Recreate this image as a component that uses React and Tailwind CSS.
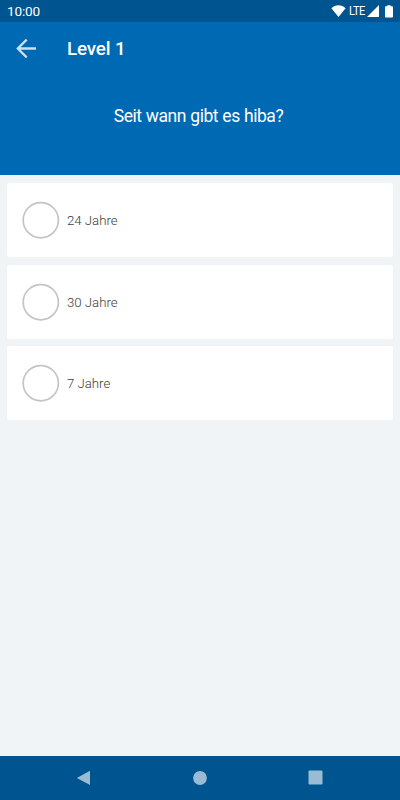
import React, { useState } from 'react';

const answers = [
  { id: 1, text: '24 Jahre' },
  { id: 2, text: '30 Jahre' },
  { id: 3, text: '7 Jahre' }
];

const StatusBar = () => (
  <div className="flex h-[22px] items-center justify-between bg-[#00548f] pl-[7px] pr-[7px] text-white">
    <span className="text-[13.6px] leading-[22px] tracking-[-0.2px]">10:00</span>
    <div className="flex h-[22px] items-center">
      <svg width="15" height="12" viewBox="0 0 15 12" fill="currentColor">
        <path d="M0.4 3.3C2.3 1.2 4.8 0.2 7.5 0.2s5.2 1 7.1 3.1L7.5 12z" />
      </svg>
      <span className="ml-[3px] w-[16px] origin-left scale-x-[0.88] text-[12.5px] leading-[22px] tracking-[-0.6px]">LTE</span>
      <svg className="ml-[2px]" width="12" height="12" viewBox="0 0 12 12" fill="currentColor">
        <path d="M12 0v12H0z" />
      </svg>
      <svg className="ml-[6px]" width="8" height="13" viewBox="0 0 8 13" fill="currentColor">
        <path d="M2.3 0.3h3.4v1H7.2a.8.8 0 0 1 .8.8v9.6a.8.8 0 0 1-.8.8H.8a.8.8 0 0 1-.8-.8V2.1a.8.8 0 0 1 .8-.8h1.5z" />
      </svg>
    </div>
  </div>
);

const NavigationBar = () => (
  <div className="flex h-[44.5px] items-center justify-between bg-[#00548f] pl-[76px] pr-[77px] text-[#99bbd3]">
    <svg width="15" height="16" viewBox="0 0 15 16" fill="currentColor">
      <path d="M14 0.7v14.4L0.8 7.9z" />
    </svg>
    <svg width="14" height="14" viewBox="0 0 14 14" fill="currentColor">
      <circle cx="7" cy="7" r="6.9" />
    </svg>
    <svg width="15" height="15" viewBox="0 0 15 15" fill="currentColor">
      <rect x="0.5" y="0.5" width="14" height="14" rx="1" />
    </svg>
  </div>
);

const App = () => {
  const [selected, setSelected] = useState(null);

  return (
    <div className="flex h-screen w-full flex-col bg-[#f0f4f7] font-['Roboto',sans-serif]">
      <StatusBar />

      {/* Header */}
      <header className="h-[153px] bg-[#0069b4] text-white">
        <div className="flex h-[53px] items-center pl-[15px]">
          <button type="button" aria-label="Zurück" className="text-[#cce1f0]">
            <svg width="22" height="22" viewBox="0 0 22 22" fill="none" stroke="currentColor" strokeWidth="2.3">
              <path d="M21 10.5H2.8M11.7 1.6L2.8 10.5l8.9 8.9" />
            </svg>
          </button>
          <h1 className="ml-[30px] text-[18.8px] font-medium leading-6 tracking-[-0.15px]">Level 1</h1>
        </div>
        <p className="mt-[29px] pr-[3px] text-center text-[17.5px] leading-6 tracking-[-0.44px] [word-spacing:0.3px]">Seit wann gibt es hiba?</p>
      </header>

      {/* Antworten */}
      <main className="flex flex-1 flex-col gap-[7.5px] px-[7px] pt-[8px]">
        {answers.map((answer) => (
          <button
            key={answer.id}
            type="button"
            onClick={() => setSelected(answer.id)}
            className="flex h-[74px] w-full items-center rounded-[2px] bg-white pl-[15px] text-left"
          >
            <svg
              width="38"
              height="38"
              viewBox="0 0 38 38"
              strokeWidth="1.7"
              className={selected === answer.id ? 'fill-[#0069b4] stroke-[#0069b4]' : 'fill-none stroke-[#c4c4c4]'}
            >
              <circle cx="18.8" cy="19.2" r="17.6" />
            </svg>
            <span className="ml-[7px] pt-[2px] text-[13.2px] font-light leading-5 text-[#3c3c3c]">{answer.text}</span>
          </button>
        ))}
      </main>

      <NavigationBar />
    </div>
  );
};

export default App;
